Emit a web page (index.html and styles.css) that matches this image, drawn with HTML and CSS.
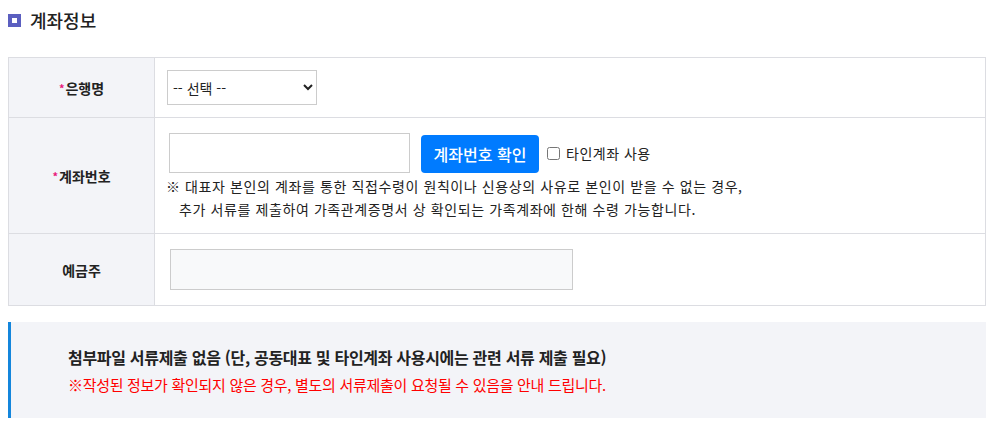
FILE: index.html
```html
<!DOCTYPE html>
<html lang="ko">
<head>
<meta charset="utf-8">
<link rel="stylesheet" href="styles.css">
</head>
<body>
<div class="page">
  <h2 class="title"><span class="title-icon"></span>계좌정보</h2>
  <div class="form-table">
    <div class="row row-bank">
      <div class="label"><span class="req">*</span>은행명</div>
      <div class="cell">
        <select class="select">
          <option>-- 선택 --</option>
        </select>
      </div>
    </div>
    <div class="row row-account">
      <div class="label"><span class="req">*</span>계좌번호</div>
      <div class="cell cell-col">
        <div class="account-line">
          <input class="input-account" type="text">
          <button class="btn-check" type="button">계좌번호 확인</button>
          <label class="chk"><input type="checkbox"> 타인계좌 사용</label>
        </div>
        <p class="note">※ 대표자 본인의 계좌를 통한 직접수령이 원칙이나 신용상의 사유로 본인이 받을 수 없는 경우,<br><span class="indent">추가 서류를 제출하여 가족관계증명서 상 확인되는 가족계좌에 한해 수령 가능합니다.</span></p>
      </div>
    </div>
    <div class="row row-owner">
      <div class="label">예금주</div>
      <div class="cell">
        <input class="input-owner" type="text" readonly>
      </div>
    </div>
  </div>
  <div class="notice">
    <p class="notice-main">첨부파일 서류제출 없음 (단, 공동대표 및 타인계좌 사용시에는 관련 서류 제출 필요)</p>
    <p class="notice-warn">※작성된 정보가 확인되지 않은 경우, 별도의 서류제출이 요청될 수 있음을 안내 드립니다.</p>
  </div>
</div>
</body>
</html>
```

FILE: styles.css
```css
* { box-sizing: border-box; }
body {
  margin: 0;
  font-family: "Noto Sans CJK KR", "Noto Sans", sans-serif;
  color: #222;
  background: #fff;
}
.page {
  padding: 8px 13px 0 8px;
}
.title {
  margin: 0;
  height: 49px;
  display: flex;
  align-items: flex-start;
  font-size: 18px;
  font-weight: 500;
  line-height: 24px;
  color: #222;
}
.title-icon {
  width: 13px;
  height: 13px;
  background: #5b5fc0;
  position: relative;
  margin: 6px 9px 0 0;
}
.title-icon::after {
  content: "";
  position: absolute;
  left: 4px; top: 4px;
  width: 5px; height: 5px;
  background: #fff;
}
.form-table {
  border: 1px solid #dcdde2;
}
.row {
  display: grid;
  grid-template-columns: 146px 1fr;
  border-top: 1px solid #dcdde2;
}
.row:first-child { border-top: 0; }
.row-bank { height: 59px; }
.row-account { height: 116px; }
.row-owner { height: 72px; }
.label {
  background: #f3f4f8;
  border-right: 1px solid #dcdde2;
  display: flex;
  align-items: center;
  justify-content: center;
  font-size: 14px;
  font-weight: 700;
  color: #222;
}
.req {
  color: #e8187a;
  font-size: 11px;
  font-weight: 700;
  margin-right: 1px;
}
.cell {
  display: flex;
  align-items: center;
  padding-left: 12px;
}
.cell-col {
  flex-direction: column;
  align-items: flex-start;
  justify-content: flex-start;
  padding-top: 15px;
  padding-left: 11px;
}
.select {
  width: 150px;
  height: 35px;
  border: 1px solid #ccc;
  border-radius: 0;
  background: #fff;
  font-family: "Noto Sans CJK KR", sans-serif;
  font-size: 14px;
  color: #222;
  padding: 0 1px;
}
.account-line {
  display: flex;
  align-items: center;
  margin-left: 4px;
}
.input-account {
  width: 241px;
  height: 40px;
  border: 1px solid #ccc;
  margin: 0 11px 0 -1px;
  padding: 0 8px;
}
.btn-check {
  width: 118px;
  height: 38px;
  background: #007bff;
  border: 0;
  border-radius: 4px;
  color: #fff;
  font-family: "Noto Sans CJK KR", sans-serif;
  font-size: 16px;
  font-weight: 500;
  margin: 2px 8px 0 0;
  padding: 0;
}
.chk {
  display: flex;
  align-items: center;
  font-size: 14px;
  letter-spacing: 0.5px;
  color: #222;
}
.chk input {
  width: 13px;
  height: 13px;
  margin: 0 6px 0 0;
}
.note {
  margin: 2px 0 0 0;
  font-size: 14px;
  line-height: 23px;
  letter-spacing: 0.6px;
  color: #222;
}
.indent { padding-left: 13px; }
.input-owner {
  width: 403px;
  height: 41px;
  margin-left: 3px;
  border: 1px solid #ccc;
  background: #f8f9fa;
}
.notice {
  margin-top: 16px;
  height: 96px;
  background: #f3f4f8;
  border-left: 3px solid #1486dc;
  padding: 22px 0 0 57px;
}
.notice p { margin: 0; }
.notice-main {
  font-size: 16px;
  font-weight: 700;
  color: #222;
  line-height: 26px;
  letter-spacing: -0.3px;
}
.notice-warn {
  font-size: 15px;
  color: #f00;
  line-height: 26px;
  margin-top: 2px !important;
  letter-spacing: -0.3px;
}
```
